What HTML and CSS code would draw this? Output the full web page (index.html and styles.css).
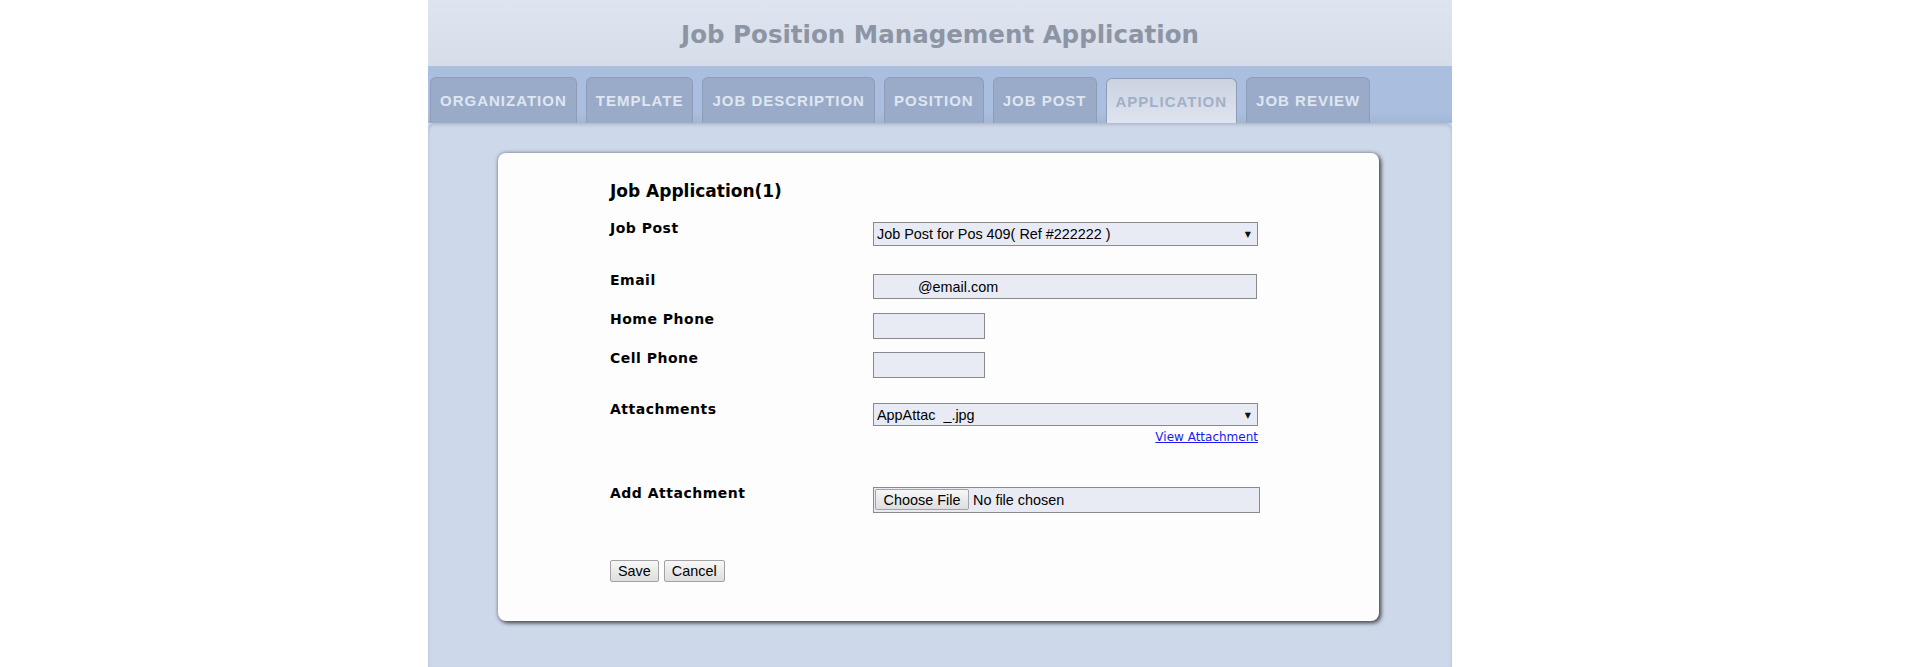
FILE: index.html
```html
<html>
<head>
    <meta charset="UTF-8">
    <title>Job Position Management Application</title>
    <link rel="stylesheet" href="styles.css">
</head>
<body>
    <div class="page">
        <header class="app-header">
            <h1>Job Position Management Application</h1>
        </header>

        <nav class="tabs">
            <a href="#" class="tab">Organization</a>
            <a href="#" class="tab">Template</a>
            <a href="#" class="tab">Job Description</a>
            <a href="#" class="tab">Position</a>
            <a href="#" class="tab">Job Post</a>
            <a href="#" class="tab active">Application</a>
            <a href="#" class="tab">Job Review</a>
        </nav>

        <main class="panel">
            <form class="card">
                <h2>Job Application(1)</h2>

                <div class="field field-post">
                    <label>Job Post</label>
                    <span class="select-wrap">
                        <select class="wide">
                            <option>Job Post for Pos 409( Ref #222222 )</option>
                        </select>
                    </span>
                </div>

                <div class="field field-email">
                    <label>Email</label>
                    <input type="text" class="wide email" value="@email.com">
                </div>

                <div class="field field-phone">
                    <label>Home Phone</label>
                    <input type="text" class="phone">
                </div>

                <div class="field field-cell">
                    <label>Cell Phone</label>
                    <input type="text" class="phone">
                </div>

                <div class="field field-attach">
                    <label>Attachments</label>
                    <div class="control">
                        <span class="select-wrap">
                            <select class="wide attach">
                                <option>AppAttac&nbsp;&nbsp;_.jpg</option>
                            </select>
                        </span>
                        <a href="#" class="view-link">View Attachment</a>
                    </div>
                </div>

                <div class="field field-file">
                    <label>Add Attachment</label>
                    <input type="file" class="file">
                </div>

                <div class="actions">
                    <button type="button">Save</button>
                    <button type="button">Cancel</button>
                </div>
            </form>
        </main>
    </div>
</body>
</html>
```

FILE: styles.css
```css
* {
    margin: 0;
    padding: 0;
    box-sizing: border-box;
}

body {
    background: #fff;
    font-family: 'DejaVu Sans', Verdana, sans-serif;
}

.page {
    width: 1024px;
    min-height: 100vh;
    margin-left: 428px;
    display: flex;
    flex-direction: column;
    background: #cdd8eb;
}

/* header */

.app-header {
    height: 66px;
    display: flex;
    align-items: center;
    justify-content: center;
    background: linear-gradient(#dfe5f0, #d6dde9);
}

.app-header h1 {
    font-size: 24.5px;
    font-weight: bold;
    color: #8d95a5;
    padding-top: 2px;
}

/* tab strip */

.tabs {
    height: 57px;
    padding: 11px 0 0 2px;
    display: flex;
    gap: 9px;
    align-items: flex-end;
    background: linear-gradient(#aabfe0 80%, #a3b6d4);
}

.tab {
    height: 46px;
    padding: 0 9px;
    display: flex;
    align-items: center;
    border: 1px solid #8f9cb6;
    border-bottom: none;
    border-radius: 6px 6px 0 0;
    background: #9aabc9;
    color: #dfe6f3;
    font-family: 'Liberation Sans', Arial, sans-serif;
    font-size: 15px;
    font-weight: bold;
    letter-spacing: 1px;
    text-transform: uppercase;
    text-decoration: none;
}

.tab.active {
    height: 45px;
    background: linear-gradient(#cbd3e1, #dee4f0);
    color: #a2afc6;
}

/* content */

.panel {
    flex: 1;
    padding: 30px 73px 46px 70px;
    border-radius: 6px 6px 0 0;
    box-shadow: inset 0 2px 3px rgba(90, 100, 120, 0.25);
}

.card {
    background: #fdfdfd;
    border-radius: 8px;
    padding: 28px 0 39px 112px;
    box-shadow: 2px 2px 4px #4a4a4a, 0 0 4px #8a8f99;
}

.card h2 {
    font-size: 17px;
    line-height: 20px;
    font-weight: bold;
    color: #000;
    margin-bottom: 21px;
}

.field {
    display: grid;
    grid-template-columns: 263px auto;
    align-items: start;
}

.field label {
    margin-top: -2px;
    font-size: 14px;
    line-height: 16px;
    font-weight: bold;
    letter-spacing: 0.5px;
    color: #000;
}

.field-post { margin-bottom: 28px; }
.field-email { margin-bottom: 14px; }
.field-phone { margin-bottom: 13px; }
.field-cell { margin-bottom: 25px; }
.field-attach { margin-bottom: 43px; }
.field-file { margin-bottom: 47px; }

.control {
    width: 385px;
    display: flex;
    flex-direction: column;
}

input,
select,
button {
    font-family: 'Liberation Sans', Arial, sans-serif;
    font-size: 14.4px;
    color: #000;
}

input[type="text"],
select {
    background: #e8ebf3;
    border: 1px solid #8a8a8a;
    border-radius: 0;
    outline: none;
}

input[type="text"] {
    height: 26px;
    padding: 0 4px;
}

input.email {
    height: 25px;
    padding-left: 44px;
}

input.phone {
    width: 112px;
}

select {
    -webkit-appearance: none;
    appearance: none;
    height: 24px;
    padding: 0 20px 0 3px;
}

select.wide {
    width: 385px;
}

select.attach {
    height: 23px;
}

input.wide {
    width: 384px;
}

.select-wrap {
    position: relative;
    display: inline-block;
    width: 385px;
}

.select-wrap::after {
    content: '\25BC';
    position: absolute;
    right: 7px;
    top: 50%;
    transform: translateY(-50%);
    font-size: 8px;
    color: #111;
    pointer-events: none;
}

.view-link {
    margin-top: 4px;
    align-self: flex-end;
    font-size: 12px;
    line-height: 14px;
    color: #1a1aee;
}

input.file {
    width: 387px;
    height: 26px;
    padding: 1px 0 0 1px;
    background: #e8ebf3;
    border: 1px solid #8a8a8a;
}

input.file::file-selector-button {
    width: 94px;
    height: 21px;
    margin-right: 4px;
    font-family: 'Liberation Sans', Arial, sans-serif;
    font-size: 14.4px;
    background: linear-gradient(#f7f7f7, #dedede);
    border: 1px solid #a3a3a3;
    border-radius: 2px;
    color: #000;
}

.actions {
    display: flex;
    gap: 5px;
}

.actions button {
    height: 22px;
    padding: 0 7px;
    background: linear-gradient(#f7f7f7, #dedede);
    border: 1px solid #a3a3a3;
    border-radius: 2px;
}
```
